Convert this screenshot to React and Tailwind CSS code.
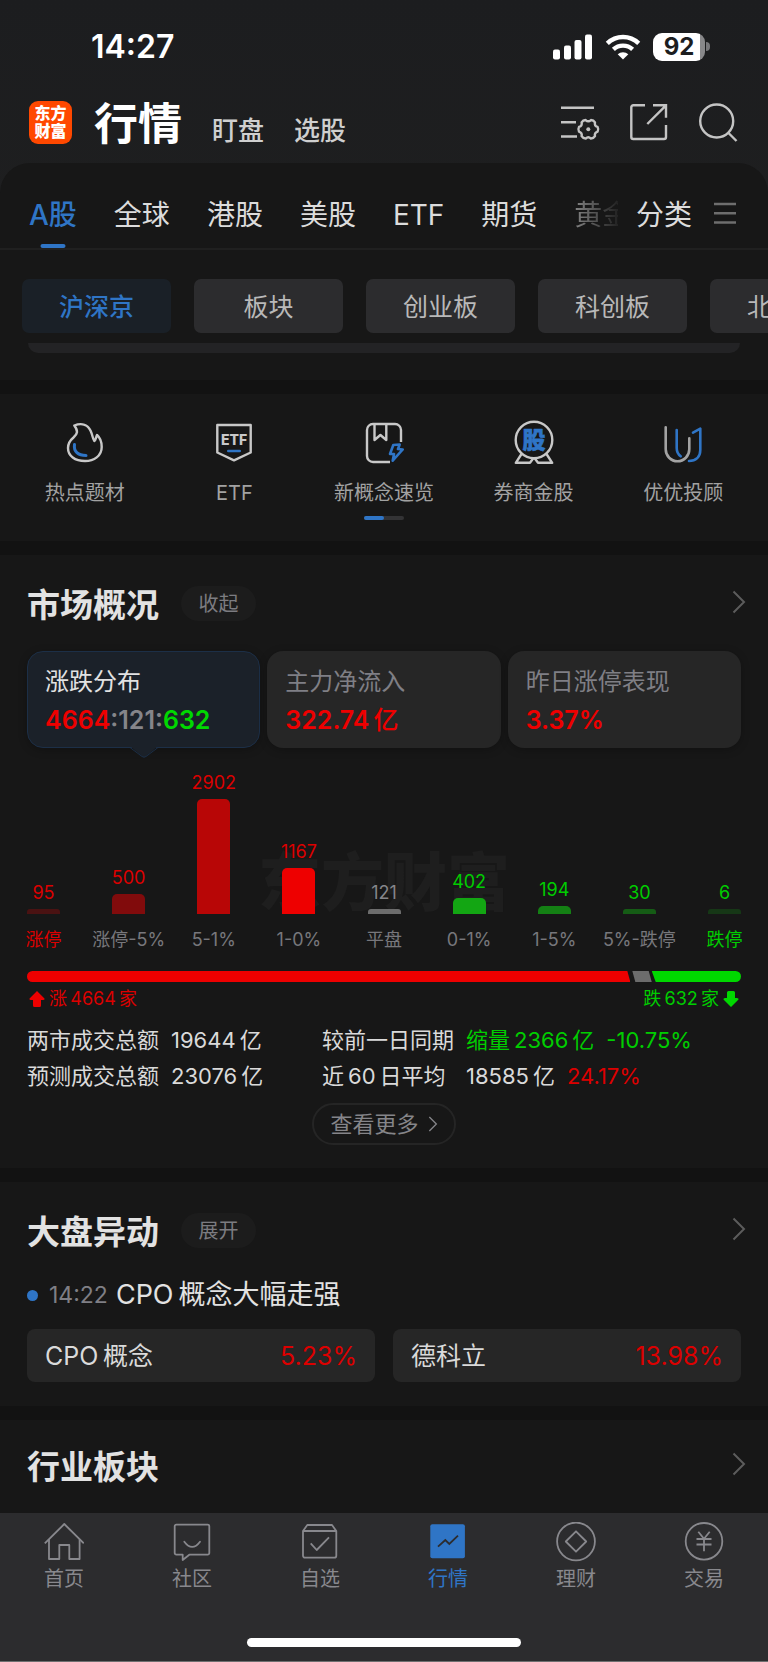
import React, { useState } from "react";
import clsx from "clsx";

const tabs = ["A股", "全球", "港股", "美股", "ETF", "期货"];
const boards = ["沪深京", "板块", "创业板", "科创板", "北交所"];

const distribution = [
  { label: "涨停", count: 95, height: 5, bar: "bg-[#4a1212]", text: "text-[#dc0000]", labelColor: "text-[#dc0000]" },
  { label: "涨停-5%", count: 500, height: 20, bar: "bg-[#810b0c]", text: "text-[#dc0000]", labelColor: "text-[#77777c]" },
  { label: "5-1%", count: 2902, height: 115, bar: "bg-[#b80606]", text: "text-[#dc0000]", labelColor: "text-[#77777c]" },
  { label: "1-0%", count: 1167, height: 46, bar: "bg-[#ee0000]", text: "text-[#dc0000]", labelColor: "text-[#77777c]" },
  { label: "平盘", count: 121, height: 5, bar: "bg-[#6c6c6c]", text: "text-[#85858a]", labelColor: "text-[#77777c]" },
  { label: "0-1%", count: 402, height: 16, bar: "bg-[#13a613]", text: "text-[#00cd00]", labelColor: "text-[#77777c]" },
  { label: "1-5%", count: 194, height: 8, bar: "bg-[#148014]", text: "text-[#00cd00]", labelColor: "text-[#77777c]" },
  { label: "5%-跌停", count: 30, height: 5, bar: "bg-[#155c15]", text: "text-[#00cd00]", labelColor: "text-[#77777c]" },
  { label: "跌停", count: 6, height: 5, bar: "bg-[#163716]", text: "text-[#00cd00]", labelColor: "text-[#00cd00]" },
];

// narrow space between latin and chinese text
const THIN = "\u2009";

// six lobed cog, drawn round 0,0
const cogPath = (() => {
  const point = (deg, r) => {
    const a = (deg * Math.PI) / 180;
    return `${(Math.cos(a) * r).toFixed(2)} ${(Math.sin(a) * r).toFixed(2)}`;
  };
  let d = `M${point(-14, 9.6)}`;
  for (let i = 0; i < 6; i++) {
    const a = i * 60;
    d += `Q${point(a, 10.6)} ${point(a + 14, 9.6)}Q${point(a + 30, 6.8)} ${point(a + 46, 9.6)}`;
  }
  return d + "Z";
})();

const Icon = ({ className, box = "0 0 40 40", width = 2, children }) => (
  <svg
    className={className}
    viewBox={box}
    fill="none"
    stroke="currentColor"
    strokeWidth={width}
    strokeLinejoin="round"
    aria-hidden="true"
  >
    {children}
  </svg>
);

const Chevron = ({ className }) => (
  <Icon className={className} box="0 0 14 24" width={2}>
    <path d="M1.5 1.5 12 12 1.5 22.5" strokeLinejoin="miter" />
  </Icon>
);

const StatusBar = () => (
  <div className="flex h-[81px] items-center justify-between pt-[12px] pr-[58px] pl-[91px]">
    <span className="text-[32px] leading-10 font-semibold text-white">14:27</span>
    <div className="flex items-center text-white">
      <svg className="h-[26px] w-[40px]" viewBox="0 0 40 26" fill="currentColor" aria-hidden="true">
        <rect x="0" y="15.5" width="7" height="10" rx="2" />
        <rect x="11" y="11.5" width="7" height="14" rx="2" />
        <rect x="21.5" y="6" width="7" height="19.5" rx="2" />
        <rect x="32" y="0.5" width="7" height="25" rx="2" />
      </svg>
      <svg className="ml-3 h-[26px] w-[36px]" viewBox="0 0 36 26" aria-hidden="true">
        <g fill="none" stroke="currentColor" strokeWidth="4.4">
          <path d="M2.3 9.3a22.6 22.6 0 0 1 31.4 0" />
          <path d="M8.4 15.4a14 14 0 0 1 19.2 0" />
        </g>
        <path d="M18 25.5l-5.3-5.2a7.6 7.6 0 0 1 10.6 0z" fill="currentColor" />
      </svg>
      <div className="ml-3 flex h-7 w-[52px] items-center justify-center rounded-[9px] bg-linear-to-r from-white from-90% to-[#88888a] to-90% text-[24px] leading-7 font-bold text-[#1c1d1f]">
        92
      </div>
      <span className="ml-px h-[9px] w-1 rounded-r-full bg-[#77777a]" />
    </div>
  </div>
);

const Header = () => (
  <header className="flex h-[82px] items-center justify-between pr-[30px] pl-[29px]">
    <div className="flex items-center">
      <a
        href="#home"
        className="flex size-[43px] flex-col items-center justify-center rounded-[9px] bg-[#ff4800] text-[16px] leading-[18px] font-black text-white"
      >
        <span>东方</span>
        <span>财富</span>
      </a>
      <nav className="ml-[22px] flex items-baseline pt-[3px] text-[26px] font-medium text-[#cfcfcf]">
        <h1 className="text-[44px] leading-[52px] font-bold text-white">行情</h1>
        <a href="#watch" className="ml-[30px]">盯盘</a>
        <a href="#pick" className="ml-[30px]">选股</a>
      </nav>
    </div>
    <div className="flex items-center text-[#c4c4c4]">
      <button aria-label="设置">
        <Icon className="h-[38px] w-[40px]" box="0 0 40 38" width={2.4}>
          <path d="M0 4.7h33M0 19.3h15M0 33.5h16" />
          <path d={cogPath} transform="translate(27.3 26.3)" />
          <circle cx="27.3" cy="26.3" r="2" fill="currentColor" stroke="none" />
        </Icon>
      </button>
      <button aria-label="分享" className="ml-[29px]">
        <Icon className="size-[38px]" box="0 0 38 38" width={2.4}>
          <path d="M15 2.3H3.3a2 2 0 0 0-2 2V34a2 2 0 0 0 2 2H34a2 2 0 0 0 2-2V22" />
          <path d="M23 2.3h13v12.4M36 2.3 17.3 21" strokeLinejoin="miter" />
        </Icon>
      </button>
      <button aria-label="搜索" className="ml-[31px]">
        <Icon className="size-[39px]" box="0 0 39 39" width={2.4}>
          <circle cx="17.7" cy="18" r="16.5" />
          <path d="m29.5 30 8 8" />
        </Icon>
      </button>
    </div>
  </header>
);

const MarketTabs = () => {
  const [active, setActive] = useState("A股");
  return (
    <div className="flex h-[87px] border-b-2 border-[#202020] pr-8 pl-[29px] text-[28px] text-[#dcdcdc]">
      <div className="flex min-w-0 flex-1 gap-[37px] overflow-hidden whitespace-nowrap">
        {tabs.map((tab) => (
          <button
            key={tab}
            onClick={() => setActive(tab)}
            className={clsx(
              "relative h-full shrink-0 pt-[18px]",
              tab === active && "font-medium text-[#2f75c6]"
            )}
          >
            {tab}
            {tab === active && (
              <span className="absolute bottom-0 left-1/2 h-1 w-[25px] -translate-x-1/2 rounded-xs bg-[#2f75c6]" />
            )}
          </button>
        ))}
        <button className="shrink-0 bg-linear-to-r from-[#858585] to-[#171717] to-90% bg-clip-text pt-[18px] text-transparent">
          黄金
        </button>
      </div>
      <button className="ml-[18px] flex shrink-0 items-center gap-[22px] pt-[18px]">
        分类
        <Icon className="mb-1 h-6 w-[22px] text-[#6e6e6e]" box="0 0 22 24" width={2.4}>
          <path d="M0 3h22M0 12.300h22M0 21.500h22" />
        </Icon>
      </button>
    </div>
  );
};

const BoardChips = () => (
  <div className="overflow-hidden pt-[29px] pb-[27px]">
    <div className="flex gap-[23px] pl-[22px]">
      {boards.map((board, i) => (
        <button
          key={board}
          className={clsx(
            "h-[54px] w-[149px] shrink-0 rounded-[7px] pt-1 text-[25px]",
            i === 0 ? "bg-[#1a2027] font-medium text-[#2f75c6]" : "bg-[#2c2c2e] text-[#b9b9b9]"
          )}
        >
          {board}
        </button>
      ))}
    </div>
    <div className="mx-7 mt-[10px] h-[10px] rounded-b-[12px] bg-[#232325]" />
  </div>
);

const shortcuts = [
  {
    name: "热点题材",
    icon: (
      <Icon className="h-[46px] w-[38px]" box="0 -4 38 46" width={2.4}>
        <path d="M8.300 3.500C16 .5 22 3 24.700 9C26.500 13 26.500 16 28.300 19C30 18 30 15 31 13C34.500 16 35.700 20 35.700 25C35.700 34 28 39 19 39C9 39 2 34 2 26C2 21 4.500 18 7.500 15.500C11.500 12 12.500 9 8.300 3.500Z" />
        <path d="M8.500 22.500C7.500 29.500 12 33.500 20 33.500" stroke="#2f75c6" strokeWidth="3" strokeLinecap="round" />
      </Icon>
    ),
  },
  {
    name: "ETF",
    icon: (
      <Icon className="h-[46px] w-[36px]" box="0 -4 36 46" width={2.4}>
        <path d="M1.300 3h33.400v27.500L18 38.300 1.300 30.500Z" />
        <text x="18" y="22.500" textAnchor="middle" fontSize="14" fontWeight="800" fill="currentColor" stroke="none">
          ETF
        </text>
        <path d="M12.300 29h11.400" stroke="#2f75c6" strokeWidth="2.600" strokeLinecap="round" />
      </Icon>
    ),
  },
  {
    name: "新概念速览",
    icon: (
      <Icon className="h-[46px] w-[40px]" box="0 -4 40 46" width={2.4}>
        <path d="M37 20V8a6 6 0 0 0-6-6H9a6 6 0 0 0-6 6v26a6 6 0 0 0 6 6h17" />
        <path d="M10.500 2v16l5.900-5 5.900 5V2" />
        <path d="M29.300 23l6.400-.500-1.700 4.500 4.700.500-10 11.200 1.300-6.700h-4Z" stroke="#2f75c6" strokeWidth="2.600" />
      </Icon>
    ),
  },
  {
    name: "券商金股",
    icon: (
      <Icon className="h-[46px] w-[40px]" box="0 0 40 46" width={2.4}>
        <circle cx="20" cy="22" r="18.300" />
        <path d="M7.500 36 1.800 44.800H16l3.300-4.500M32.500 36l5.700 8.800H24l-3.300-4.500" />
        <text x="20" y="30" textAnchor="middle" fontSize="23" fontWeight="900" fill="#2f75c6" stroke="#2f75c6" strokeWidth="0.600">
          股
        </text>
      </Icon>
    ),
  },
  {
    name: "优优投顾",
    icon: (
      <Icon className="h-[46px] w-[40px]" box="0 -6 40 46" width={2.6}>
        <path d="M2.700 3.300V25.300a11.800 12 0 0 0 23.600 0V14.300" stroke="#a3a3a3" strokeLinecap="round" />
        <path d="M13.700 6v18c0 4 1.500 6.500 4 8.300M30 8.700l7.300-4V26c0 7-4.500 11-11.300 11" stroke="#2f75c6" strokeLinecap="round" />
      </Icon>
    ),
  },
];

const Shortcuts = () => (
  <section className="bg-[#171717] px-[10px] pt-6 pb-[21px]">
    <div className="grid grid-cols-5">
      {shortcuts.map((item) => (
        <a key={item.name} href="#shortcut" className="flex flex-col items-center text-[#c8c8c8]">
          {item.icon}
          <span className="mt-[17px] text-[20px] leading-6 text-[#a2a2a2]">{item.name}</span>
        </a>
      ))}
    </div>
    <div className="mx-auto mt-[11px] flex h-1 w-10 rounded-full bg-[#333335]">
      <span className="w-5 rounded-full bg-[#2f75c6]" />
    </div>
  </section>
);

const SectionTitle = ({ title, action, className = "h-24" }) => (
  <div className={clsx("flex items-center", className)}>
    <h2 className="pt-1 text-[33px] leading-10 font-bold text-[#e2e2e2]">{title}</h2>
    {action && (
      <button className="ml-[22px] h-[35px] w-[75px] rounded-full bg-[#1c1c1c] pt-px text-[20px] leading-6 text-[#7c7c81]">
        {action}
      </button>
    )}
    <a href="#more" aria-label={title} className="-mr-[5px] ml-auto pb-[3px]">
      <Chevron className="h-6 w-[14px] text-[#5c5c5c]" />
    </a>
  </div>
);

const SummaryCard = ({ title, active, children }) => (
  <button
    className={clsx(
      "relative flex h-[97px] flex-col justify-center rounded-2xl border px-[17px] pt-[2px] text-left shadow-[0_2px_8px_rgba(0,0,0,0.25)]",
      active ? "border-[#1c2f47] bg-[#1b2129]" : "border-transparent bg-[#262626]"
    )}
  >
    <span className={clsx("text-[24px] leading-[39px]", active ? "text-[#e2e2e2]" : "text-[#7f7f85]")}>{title}</span>
    <span className="text-[25px] leading-[39px] font-semibold text-[#ee0000]">{children}</span>
    {active && (
      <svg className="absolute top-full left-1/2 h-[11px] w-7 -translate-x-1/2" viewBox="0 0 28 11" aria-hidden="true">
        <path d="M0 -1H28L16 9.500Q14 11 12 9.500Z" fill="#1b2129" />
        <path d="M0 0.500L12 9.500Q14 11 16 9.500L28 0.500" fill="none" stroke="#1c2f47" />
      </svg>
    )}
  </button>
);

const DistributionChart = () => (
  <div>
    <div className="relative flex h-[166px] items-end justify-between">
      <span className="absolute bottom-0 left-1/2 -translate-x-1/2 text-[63px] leading-[64px] font-black whitespace-nowrap text-[#1e1e1e]">
        东方财富
      </span>
      {distribution.map((item) => (
        <div key={item.label} className="relative flex w-[33px] flex-col items-center">
          <span className={clsx("mb-1 text-[18px] leading-6", item.text)}>{item.count}</span>
          <div
            className={clsx("w-full", item.height > 5 ? "rounded-t-[5px]" : "rounded-t-[3px]", item.bar)}
            style={{ height: item.height }}
          />
        </div>
      ))}
    </div>
    <div className="mt-[14px] flex justify-between text-[18px] leading-6">
      {distribution.map((item) => (
        <div key={item.label} className={clsx("flex w-[33px] justify-center whitespace-nowrap", item.labelColor)}>
          {item.label}
        </div>
      ))}
    </div>
  </div>
);

const ArrowUp = ({ className }) => (
  <svg className={className} viewBox="0 0 16 16" fill="currentColor" aria-hidden="true">
    <path d="M8 0 15.500 7.500Q16 9 14 9H12V14.500Q12 16 10.500 16H5.500Q4 16 4 14.500V9H2Q0 9 .5 7.500Z" />
  </svg>
);

const MarketOverview = () => (
  <section className="bg-[#171717] px-[27px] pb-[23px]">
    <SectionTitle title="市场概况" action="收起" />
    <div className="grid grid-cols-3 gap-[7px]">
      <SummaryCard title="涨跌分布" active>
        4664<span className="text-[#85858a]">:121:</span>
        <span className="text-[#00d800]">632</span>
      </SummaryCard>
      <SummaryCard title="主力净流入">
        322.74{THIN}
        <span className="font-medium">亿</span>
      </SummaryCard>
      <SummaryCard title="昨日涨停表现">3.37%</SummaryCard>
    </div>
    <DistributionChart />

    {/* up / flat / down share */}
    <div className="mt-[19px] flex h-[11px]">
      <div className="w-[84.500%] rounded-l-full bg-[#ee0000] [clip-path:polygon(0_0,calc(100%-3px)_0,100%_100%,0_100%)]" />
      <div className="w-[3%] bg-[#6c6c6c] [clip-path:polygon(2px_0,calc(100%-3px)_0,100%_100%,5px_100%)]" />
      <div className="flex-1 rounded-r-full bg-[#00d800] [clip-path:polygon(0_0,100%_0,100%_100%,4px_100%)]" />
    </div>
    <div className="mt-[5px] flex justify-between px-[2px] text-[18px] leading-6">
      <span className="flex items-center gap-1 text-[#dc0000]">
        <ArrowUp className="size-4 text-[#ee0000]" />
        {`涨${THIN}4664${THIN}家`}
      </span>
      <span className="flex items-center gap-1 text-[#00cd00]">
        {`跌${THIN}632${THIN}家`}
        <ArrowUp className="size-4 rotate-180 text-[#00d800]" />
      </span>
    </div>

    <div className="mt-[11px] grid grid-cols-[295fr_419fr] text-[22px] leading-9 whitespace-nowrap text-[#dadada]">
      <dl className="grid grid-cols-[auto_1fr] gap-x-3">
        <dt>两市成交总额</dt>
        <dd>{`19644${THIN}亿`}</dd>
        <dt>预测成交总额</dt>
        <dd>{`23076${THIN}亿`}</dd>
      </dl>
      <dl className="grid grid-cols-[auto_1fr] gap-x-3">
        <dt>较前一日同期</dt>
        <dd className="flex gap-3 text-[#00cd00]">
          <span>{`缩量${THIN}2366${THIN}亿`}</span>
          <span>-10.75%</span>
        </dd>
        <dt>{`近${THIN}60${THIN}日平均`}</dt>
        <dd className="flex gap-3">
          <span>{`18585${THIN}亿`}</span>
          <span className="text-[#dc0000]">24.17%</span>
        </dd>
      </dl>
    </div>
    <button className="mx-auto mt-[9px] flex h-[42px] items-center gap-[9px] rounded-full border-2 border-[#252525] px-[16px] text-[22px] leading-7 text-[#858589]">
      查看更多
      <Chevron className="h-4 w-[10px]" />
    </button>
  </section>
);

const MoverCard = ({ name, change }) => (
  <a
    href="#stock"
    className="flex h-[53px] items-center justify-between rounded-lg bg-[#262626] px-[18px] pt-px text-[25px] leading-8 text-[#dadada]"
  >
    <span>{name}</span>
    <span className="text-[#dc0000]">{change}</span>
  </a>
);

const MarketMoves = () => (
  <section className="bg-[#171717] px-[27px] pb-6">
    <SectionTitle title="大盘异动" action="展开" />
    <p className="flex h-[34px] items-center text-[27px] text-[#e2e2e2]">
      <span className="size-[11px] rounded-full bg-[#2f75c6]" />
      <time className="ml-[11px] text-[23px] text-[#7f7f85]">14:22</time>
      <span className="ml-2">{`CPO${THIN}概念大幅走强`}</span>
    </p>
    <div className="mt-[17px] grid grid-cols-2 gap-[18px]">
      <MoverCard name={`CPO${THIN}概念`} change="5.23%" />
      <MoverCard name="德科立" change="13.98%" />
    </div>
  </section>
);

const navItems = [
  {
    name: "首页",
    icon: (
      <>
        <path d="M.8 21.300 20.300 2 39.800 21.300" />
        <path d="M5 17.300V37h10.300V23h10V37h10.300V17.300" />
      </>
    ),
  },
  {
    name: "社区",
    icon: (
      <>
        <path d="M4.300 2.700h31.400a1.600 1.600 0 0 1 1.600 1.600v26.800a1.600 1.600 0 0 1-1.600 1.600H17.300L10.700 38v-5.300H4.300a1.600 1.600 0 0 1-1.600-1.600V4.300a1.600 1.600 0 0 1 1.600-1.600Z" />
        <path d="M12.300 19.700q7.900 10.500 15.700 0" strokeLinecap="round" />
      </>
    ),
  },
  {
    name: "自选",
    icon: (
      <>
        <path d="M3 9h33.300v24.700a2 2 0 0 1-2 2H5a2 2 0 0 1-2-2ZM3 9l4.300-6H32l4.300 6" />
        <path d="m10.700 21.300 6 6.700L29 15.300" />
      </>
    ),
  },
  {
    name: "行情",
    active: true,
    icon: (
      <>
        <rect x="2.300" y="2.300" width="34.600" height="34" rx="2" fill="currentColor" stroke="none" />
        <path d="m10 24.700 7.300-6.700 4 4 8.700-8.300" stroke="#2c2c2e" strokeLinejoin="miter" />
      </>
    ),
  },
  {
    name: "理财",
    icon: (
      <>
        <circle cx="20" cy="19.500" r="18.900" />
        <path d="M20 9.300 30.200 19.500 20 29.700 9.800 19.500Z" />
      </>
    ),
  },
  {
    name: "交易",
    icon: (
      <>
        <circle cx="20" cy="19.300" r="18.300" />
        <path d="m14.300 9.700 5.700 7 5.700-7M12.500 17h15M12.500 22.500h15M20 16.700v12.500" />
      </>
    ),
  },
];

const BottomNav = () => (
  <footer className="border-b border-[#6f6f70] bg-[#2c2c2e] pt-[9px] pb-[14px]">
    <nav className="grid grid-cols-6">
      {navItems.map((item) => (
        <a
          key={item.name}
          href="#nav"
          className={clsx("flex flex-col items-center", item.active ? "text-[#2f75c6]" : "text-[#88888d]")}
        >
          <Icon className="size-10" width={1.8}>
            {item.icon}
          </Icon>
          <span className="mt-[7px] text-[20px] leading-5">{item.name}</span>
        </a>
      ))}
    </nav>
    <div className="mx-auto mt-[49px] h-[9px] w-[274px] rounded-full bg-white" />
  </footer>
);

const App = () => {
  return (
    <div className="flex min-h-screen flex-col bg-[#121212] font-['Inter','Noto_Sans_CJK_SC',sans-serif]">
      <div className="bg-linear-to-b from-[#1c1d1f] to-[#202020]">
        <StatusBar />
        <Header />
        <div className="rounded-t-[30px] bg-[#171717]">
          <MarketTabs />
          <BoardChips />
        </div>
      </div>
      <main className="mt-[14px] flex flex-1 flex-col gap-[14px]">
        <Shortcuts />
        <MarketOverview />
        <MarketMoves />
        <section className="flex-1 bg-[#171717] px-[27px] pb-[3px]">
          <SectionTitle title="行业板块" className="h-[90px]" />
        </section>
      </main>
      <BottomNav />
    </div>
  );
};

export default App;
